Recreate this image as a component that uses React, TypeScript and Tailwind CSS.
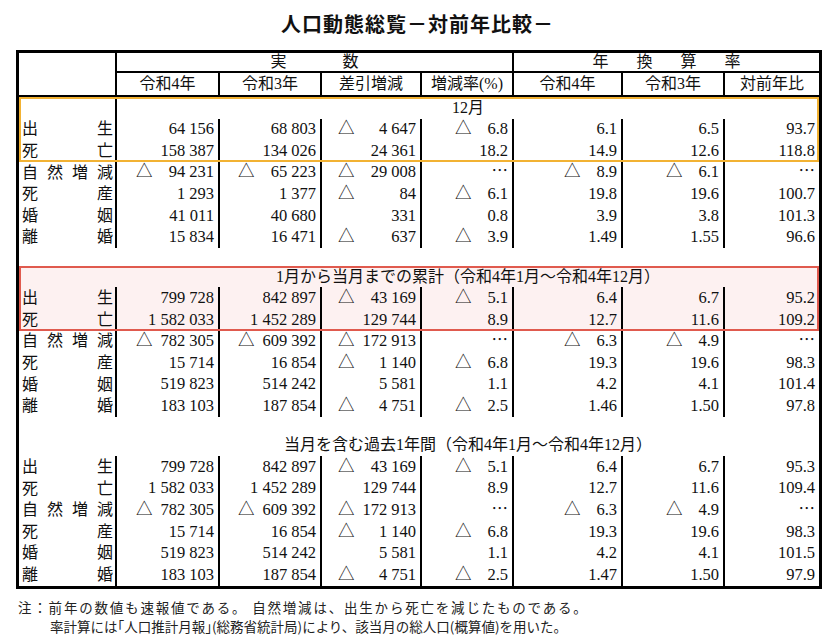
type Cell = { v: string; neg?: boolean };
type Row = { label: string[]; cells: Cell[] };
type Section = { title: string; rows: Row[]; tone?: "orange" | "red"; labelLine?: boolean };

// cells: 4 actual counts (3 integers + 1 rate) then 3 annual rates
const n = (v: string): Cell => ({ v });
const m = (v: string): Cell => ({ v, neg: true });
const DOTS = "⋯";

const LABELS = {
  birth: ["出", "生"],
  death: ["死", "亡"],
  natural: ["自", "然", "増", "減"],
  stillbirth: ["死", "産"],
  marriage: ["婚", "姻"],
  divorce: ["離", "婚"],
};

const sections: Section[] = [
  {
    title: "12月",
    tone: "orange",
    labelLine: true,
    rows: [
      { label: LABELS.birth, cells: [n("64 156"), n("68 803"), m("4 647"), m("6.8"), n("6.1"), n("6.5"), n("93.7")] },
      { label: LABELS.death, cells: [n("158 387"), n("134 026"), n("24 361"), n("18.2"), n("14.9"), n("12.6"), n("118.8")] },
      { label: LABELS.natural, cells: [m("94 231"), m("65 223"), m("29 008"), n(DOTS), m("8.9"), m("6.1"), n(DOTS)] },
      { label: LABELS.stillbirth, cells: [n("1 293"), n("1 377"), m("84"), m("6.1"), n("19.8"), n("19.6"), n("100.7")] },
      { label: LABELS.marriage, cells: [n("41 011"), n("40 680"), n("331"), n("0.8"), n("3.9"), n("3.8"), n("101.3")] },
      { label: LABELS.divorce, cells: [n("15 834"), n("16 471"), m("637"), m("3.9"), n("1.49"), n("1.55"), n("96.6")] },
    ],
  },
  {
    title: "1月から当月までの累計（令和4年1月～令和4年12月）",
    tone: "red",
    rows: [
      { label: LABELS.birth, cells: [n("799 728"), n("842 897"), m("43 169"), m("5.1"), n("6.4"), n("6.7"), n("95.2")] },
      { label: LABELS.death, cells: [n("1 582 033"), n("1 452 289"), n("129 744"), n("8.9"), n("12.7"), n("11.6"), n("109.2")] },
      { label: LABELS.natural, cells: [m("782 305"), m("609 392"), m("172 913"), n(DOTS), m("6.3"), m("4.9"), n(DOTS)] },
      { label: LABELS.stillbirth, cells: [n("15 714"), n("16 854"), m("1 140"), m("6.8"), n("19.3"), n("19.6"), n("98.3")] },
      { label: LABELS.marriage, cells: [n("519 823"), n("514 242"), n("5 581"), n("1.1"), n("4.2"), n("4.1"), n("101.4")] },
      { label: LABELS.divorce, cells: [n("183 103"), n("187 854"), m("4 751"), m("2.5"), n("1.46"), n("1.50"), n("97.8")] },
    ],
  },
  {
    title: "当月を含む過去1年間（令和4年1月～令和4年12月）",
    rows: [
      { label: LABELS.birth, cells: [n("799 728"), n("842 897"), m("43 169"), m("5.1"), n("6.4"), n("6.7"), n("95.3")] },
      { label: LABELS.death, cells: [n("1 582 033"), n("1 452 289"), n("129 744"), n("8.9"), n("12.7"), n("11.6"), n("109.4")] },
      { label: LABELS.natural, cells: [m("782 305"), m("609 392"), m("172 913"), n(DOTS), m("6.3"), m("4.9"), n(DOTS)] },
      { label: LABELS.stillbirth, cells: [n("15 714"), n("16 854"), m("1 140"), m("6.8"), n("19.3"), n("19.6"), n("98.3")] },
      { label: LABELS.marriage, cells: [n("519 823"), n("514 242"), n("5 581"), n("1.1"), n("4.2"), n("4.1"), n("101.5")] },
      { label: LABELS.divorce, cells: [n("183 103"), n("187 854"), m("4 751"), m("2.5"), n("1.47"), n("1.50"), n("97.9")] },
    ],
  },
];

const GRID = "grid grid-cols-[98px_103px_102px_100px_92px_109px_102px_94px]";

function ValueCell({ cell, index }: { cell: Cell; index: number }) {
  const isInt = index < 3;
  const last = index === 6;
  return (
    <div
      className={`flex h-[21.6px] items-center justify-end whitespace-nowrap pr-[4px] text-[16.5px] ${
        last ? "" : "border-r-2 border-black"
      }`}
    >
      <span className="w-[16px] text-left leading-none">{cell.neg ? "△" : ""}</span>
      <span className={`${isInt ? "min-w-[62px]" : "min-w-[37px]"} text-right leading-none`}>{cell.v}</span>
    </div>
  );
}

function DataRow({ row }: { row: Row }) {
  return (
    <div className={GRID}>
      <div className="flex h-[21.6px] items-center justify-between border-r-2 border-black pl-[3px] pr-[2px] leading-none">
        {row.label.map((ch, i) => (
          <span key={i}>{ch}</span>
        ))}
      </div>
      {row.cells.map((c, i) => (
        <ValueCell key={i} cell={c} index={i} />
      ))}
    </div>
  );
}

function SectionBlock({ section }: { section: Section }) {
  const head = (
    <div className={GRID}>
      <div className={`h-[21.6px] ${section.labelLine ? "border-r-2 border-black" : ""}`} />
      <div className="col-span-7 flex h-[21.6px] items-center justify-center leading-none">
        {section.title}
      </div>
    </div>
  );
  const highlighted = section.rows.slice(0, 2);
  const rest = section.rows.slice(2);

  if (!section.tone) {
    return (
      <div>
        {head}
        {section.rows.map((r, i) => (
          <DataRow key={i} row={r} />
        ))}
      </div>
    );
  }

  return (
    <div>
      <div className={`relative ${section.tone === "red" ? "bg-[#fdf1f1]" : ""}`}>
        {head}
        {highlighted.map((r, i) => (
          <DataRow key={i} row={r} />
        ))}
        <div
          className={`pointer-events-none absolute inset-0 border-2 ${
            section.tone === "red" ? "border-[#e05a4e]" : "border-[#f2b233]"
          }`}
        />
      </div>
      {rest.map((r, i) => (
        <DataRow key={i} row={r} />
      ))}
    </div>
  );
}

export default function App() {
  return (
    <div className="h-[635px] w-[835px] overflow-hidden bg-white text-[16px] text-[#111] font-['Liberation_Serif','Noto_Sans_CJK_JP',serif]">
      <div className="flex h-[50px] items-center justify-center pb-[2px] text-[20px] font-bold tracking-[1px] font-['Noto_Sans_CJK_JP',sans-serif]">
        人口動態総覧－対前年比較－
      </div>

      <div className="ml-[16px] w-[806px] border-[3px] border-black">
        {/* header */}
        <div className={GRID}>
          <div className="row-span-2 border-r-2 border-b-2 border-black" />
          <div className="col-span-4 flex h-[20px] items-center justify-center gap-[56px] border-r-2 border-b-2 border-black leading-none">
            <span>実</span>
            <span>数</span>
          </div>
          <div className="col-span-3 flex h-[20px] items-center justify-center gap-[28px] border-b-2 border-black leading-none">
            <span>年</span>
            <span>換</span>
            <span>算</span>
            <span>率</span>
          </div>
          {["令和4年", "令和3年", "差引増減", "増減率(%)", "令和4年", "令和3年", "対前年比"].map((h, i) => (
            <div
              key={i}
              className={`flex h-[24px] items-center justify-center border-b-2 border-black leading-none ${
                i === 6 ? "" : "border-r-2"
              }`}
            >
              {h}
            </div>
          ))}
        </div>

        {sections.map((s, i) => (
          <div key={i}>
            {i > 0 && <div className="h-[17.7px]" />}
            <SectionBlock section={s} />
          </div>
        ))}
      </div>

      <div className="mt-[9px] pl-[18px] text-[13.5px] leading-[19px] font-['Noto_Sans_CJK_JP',sans-serif] text-[#222]">
        <p className="tracking-[1.8px]">注：前年の数値も速報値である。 自然増減は、出生から死亡を減じたものである。</p>
        <p className="pl-[32px] tracking-[0px]">率計算には｢人口推計月報｣(総務省統計局)により、該当月の総人口(概算値)を用いた。</p>
      </div>
    </div>
  );
}
